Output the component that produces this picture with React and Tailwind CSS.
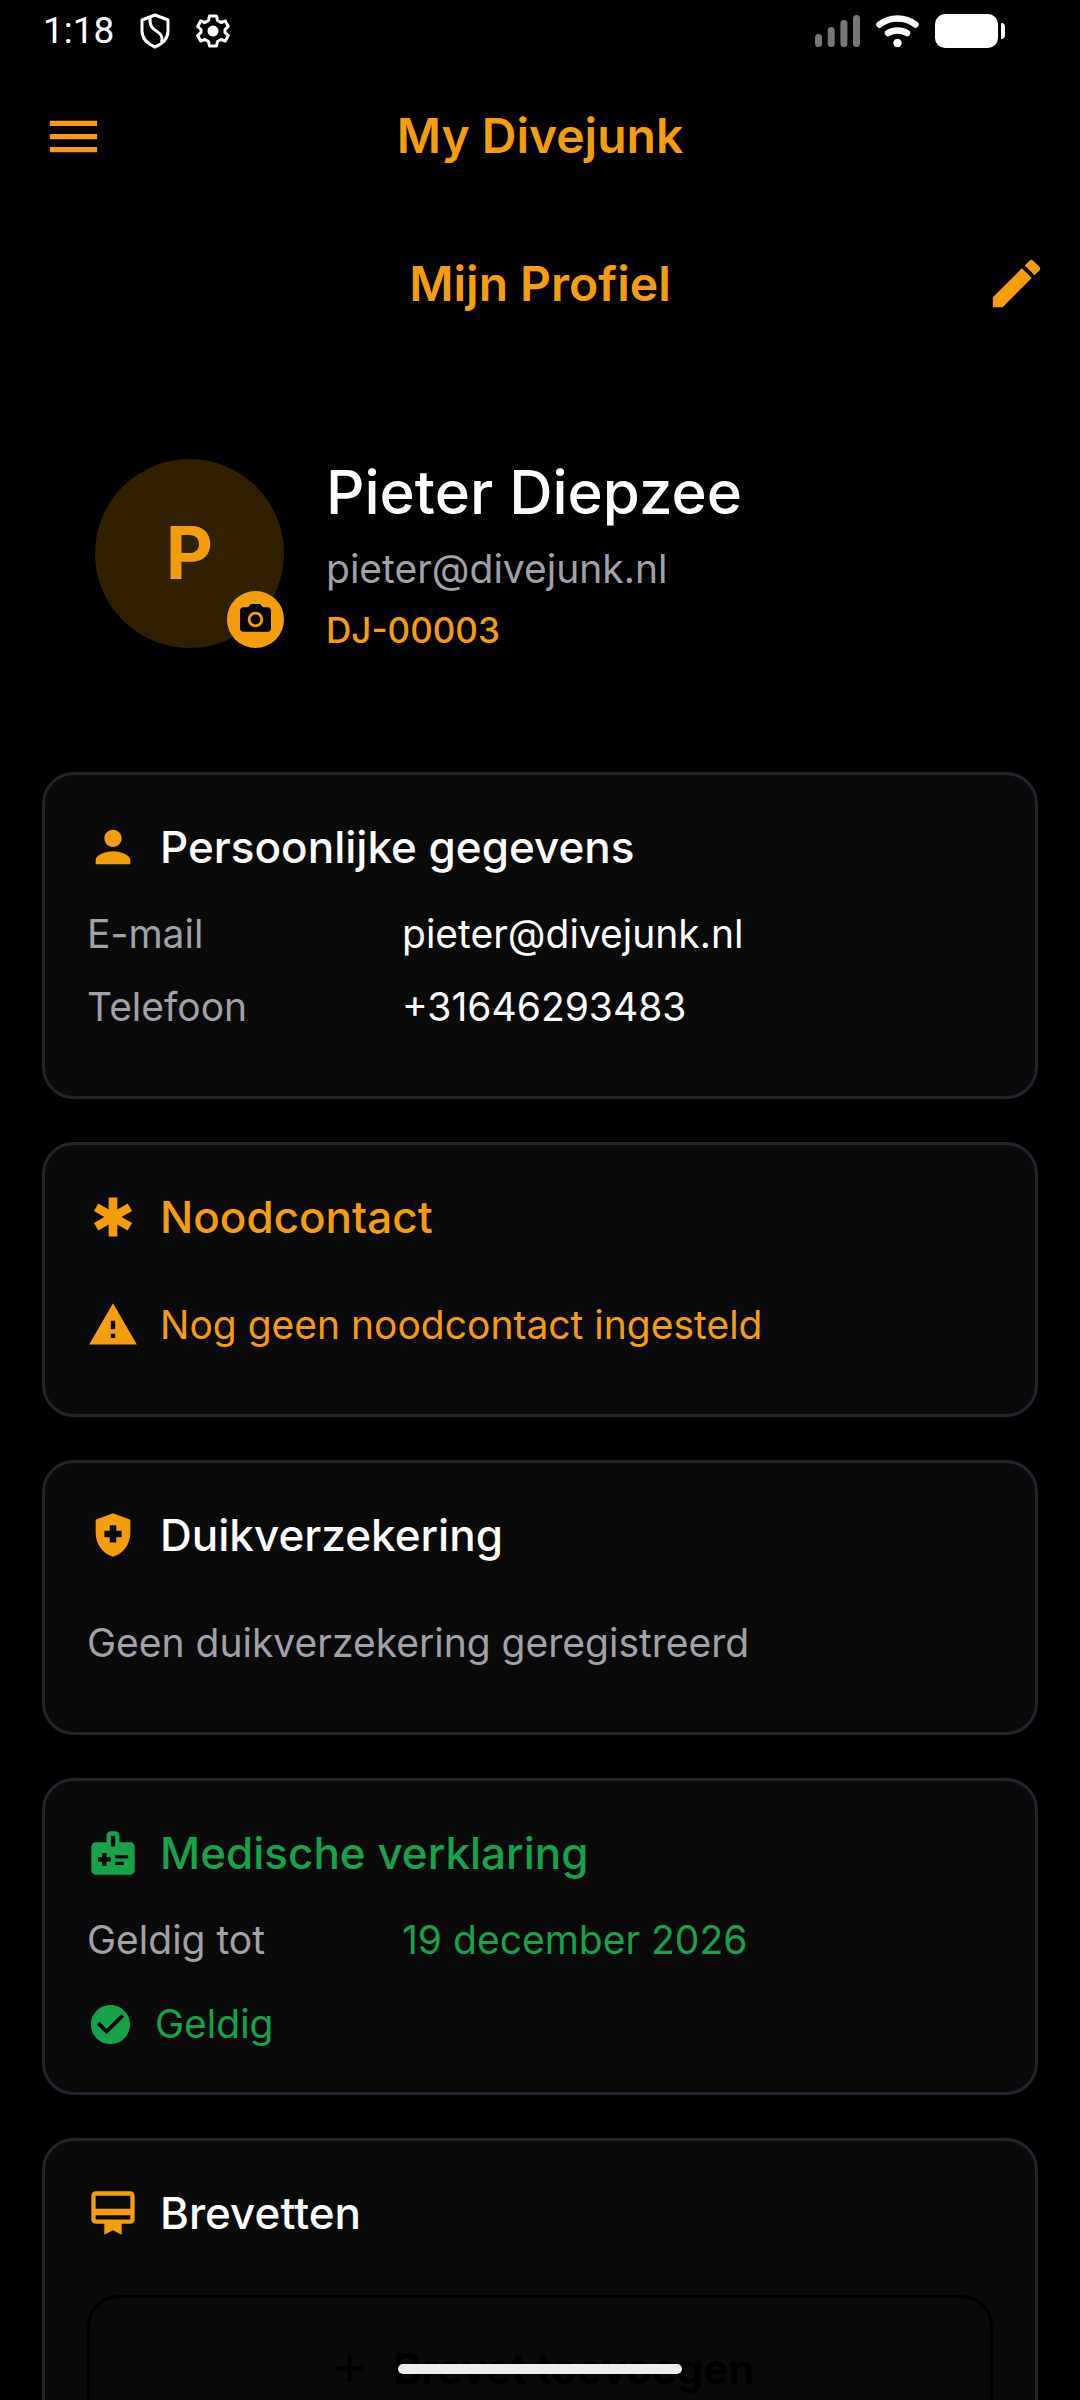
import {
  MdAdd,
  MdCameraAlt,
  MdCardMembership,
  MdCheckCircle,
  MdEdit,
  MdEmergency,
  MdHealthAndSafety,
  MdMedicalInformation,
  MdMenu,
  MdPerson,
  MdWarning,
} from 'react-icons/md'

const diver = {
  name: 'Pieter Diepzee',
  email: 'pieter@divejunk.nl',
  memberId: 'DJ-00003',
  phone: '+31646293483',
  medicalValidUntil: '19 december 2026',
}

function StatusBar() {
  return (
    <div className="flex h-[62px] shrink-0 items-center justify-between pl-[43px] pr-[75px] text-white">
      <div className="flex items-center gap-[26px]">
        <span className="font-[Roboto,sans-serif] text-[37px] leading-[42px]">1:18</span>
        <svg className="h-[36px] w-[30px]" viewBox="0 0 30 36" fill="none" stroke="currentColor" strokeWidth="3">
          <path d="M15 2 28 7V18C28 26 22 31 15 34 8 31 2 26 2 18V7Z" strokeLinejoin="round" />
          <path d="M10 4.500C9.500 13 12 15.500 17 18.500 21 21 23 23.500 21.500 29" />
        </svg>
        <svg className="h-[34px] w-[34px]" viewBox="0 0 34 34" fill="none" stroke="currentColor" strokeWidth="3" strokeLinejoin="round">
          <path d="M13.500 2h7l1 4.500 3.500 2 4.300-1.500 3 5.500-3.300 3v3l3.300 3-3 5.500-4.300-1.500-3.500 2-1 4.500h-7l-1-4.500-3.500-2L4.700 27l-3-5.500 3.300-3v-3l-3.300-3 3-5.500L9 8.500l3.500-2Z" />
          <circle cx="17" cy="17" r="5.500" fill="currentColor" stroke="none" />
        </svg>
      </div>
      <div className="flex items-center gap-[16px]">
        <svg className="h-[32px] w-[45px]" viewBox="0 0 45 32" fill="#777777">
          <rect x="0" y="19" width="7" height="13" rx="3.500" />
          <rect x="12.700" y="12" width="7" height="20" rx="3.500" />
          <rect x="25.400" y="5" width="7" height="27" rx="3.500" />
          <rect x="38" y="0" width="7" height="32" rx="3.500" />
        </svg>
        <svg className="h-[32px] w-[43px]" viewBox="0 0 43 32" fill="none" stroke="currentColor" strokeWidth="6.500" strokeLinecap="round">
          <path d="M3.500 9.500C14 1.500 29 1.500 39.500 9.500" />
          <path d="M12 18C17.500 14.500 25.500 14.500 31 18" />
          <circle cx="21.500" cy="28" r="4.200" fill="currentColor" stroke="none" />
        </svg>
        <svg className="h-[34px] w-[70px]" viewBox="0 0 70 34" fill="currentColor">
          <rect width="63" height="34" rx="10" />
          <path d="M66 9c3 0 4 1.500 4 4v8c0 2.500-1 4-4 4Z" />
        </svg>
      </div>
    </div>
  )
}

function Card({ icon: Icon, title, color, titleColor, children }) {
  return (
    <section className="rounded-[32px] border-[3px] border-[#1f2630] bg-[#0a0a0a] p-[42px]">
      <div className="mb-[31px] flex h-[60px] items-center gap-[21px]">
        <Icon className={`size-[52px] ${color}`} />
        <h3 className={`text-[44px] leading-[60px] font-medium ${titleColor}`}>{title}</h3>
      </div>
      {children}
    </section>
  )
}

function Field({ label, value, valueColor = 'text-white' }) {
  return (
    <div className="mb-[21px] flex text-[39px] leading-[52px]">
      <dt className="w-[315px] shrink-0 text-[#a1a1aa]">{label}</dt>
      <dd className={valueColor}>{value}</dd>
    </div>
  )
}

export default function App() {
  return (
    <div className="relative flex h-screen flex-col overflow-hidden bg-black font-[Inter,sans-serif] text-white">
      <StatusBar />

      <header className="grid h-[148px] shrink-0 grid-cols-[63px_1fr_63px] items-center px-[42px] text-[#f59e0b]">
        <button type="button" aria-label="Menu">
          <MdMenu className="size-[63px]" />
        </button>
        <h1 className="text-center text-[48px] leading-[60px] font-semibold">My Divejunk</h1>
      </header>

      <div className="grid h-[147px] shrink-0 grid-cols-[63px_1fr_63px] items-center px-[32px] text-[#f59e0b]">
        <h2 className="col-start-2 text-center text-[48px] leading-[60px] font-semibold">Mijn Profiel</h2>
        <button type="button" aria-label="Profiel bewerken">
          <MdEdit className="size-[63px]" />
        </button>
      </div>

      <main className="min-h-0 flex-1 overflow-y-auto px-[42px] pt-[92px] [scrollbar-width:none]">
        <div className="flex items-center gap-[42px] px-[53px]">
          <div className="relative flex size-[189px] shrink-0 items-center justify-center rounded-full bg-[#312000]">
            <span className="text-[73px] leading-[84px] font-bold text-[#f59e0b]">P</span>
            {/* Foto wijzigen */}
            <button
              type="button"
              aria-label="Foto wijzigen"
              className="absolute right-0 bottom-0 flex size-[57px] items-center justify-center rounded-full bg-[#f59e0b] text-black"
            >
              <MdCameraAlt className="size-[37px]" />
            </button>
          </div>
          <div>
            <p className="text-[60px] leading-[86px] font-medium">{diver.name}</p>
            <p className="text-[39px] leading-[68px] text-[#a1a1aa]">{diver.email}</p>
            <p className="text-[35px] leading-[54px] font-medium text-[#f59e0b]">{diver.memberId}</p>
          </div>
        </div>

        <div className="mt-[115px] flex flex-col gap-[43px]">
          <Card icon={MdPerson} title="Persoonlijke gegevens" color="text-[#f59e0b]" titleColor="text-white">
            <dl>
              <Field label="E-mail" value={diver.email} />
              <Field label="Telefoon" value={diver.phone} />
            </dl>
          </Card>

          <Card icon={MdEmergency} title="Noodcontact" color="text-[#f59e0b]" titleColor="text-[#f59e0b]">
            <div className="flex items-center gap-[21px] py-[21px] text-[#f59e0b]">
              <MdWarning className="size-[52px]" />
              <p className="text-[39px] leading-[52px]">Nog geen noodcontact ingesteld</p>
            </div>
          </Card>

          <Card icon={MdHealthAndSafety} title="Duikverzekering" color="text-[#f59e0b]" titleColor="text-white">
            <p className="py-[21px] text-[39px] leading-[52px] text-[#a1a1aa]">
              Geen duikverzekering geregistreerd
            </p>
          </Card>

          <Card icon={MdMedicalInformation} title="Medische verklaring" color="text-[#16a34a]" titleColor="text-[#16a34a]">
            <dl>
              <Field label="Geldig tot" value={diver.medicalValidUntil} valueColor="text-[#16a34a]" />
            </dl>
            <div className="mt-[32px] flex items-center gap-[21px] text-[#16a34a]">
              <MdCheckCircle className="size-[47px]" />
              <p className="text-[39px] leading-[52px]">Geldig</p>
            </div>
          </Card>

          <Card icon={MdCardMembership} title="Brevetten" color="text-[#f59e0b]" titleColor="text-white">
            <button
              type="button"
              className="mt-[52px] flex h-[147px] w-full items-center justify-center gap-[21px] rounded-[32px] border-[3px] border-black text-[42px] leading-[52px] font-bold text-black"
            >
              <MdAdd className="size-[47px]" />
              Brevet toevoegen
            </button>
          </Card>
        </div>
      </main>

      {/* Android navigatiebalk */}
      <div className="absolute bottom-[26px] left-1/2 h-[10px] w-[284px] -translate-x-1/2 rounded-full bg-[#ececec]" />
    </div>
  )
}
